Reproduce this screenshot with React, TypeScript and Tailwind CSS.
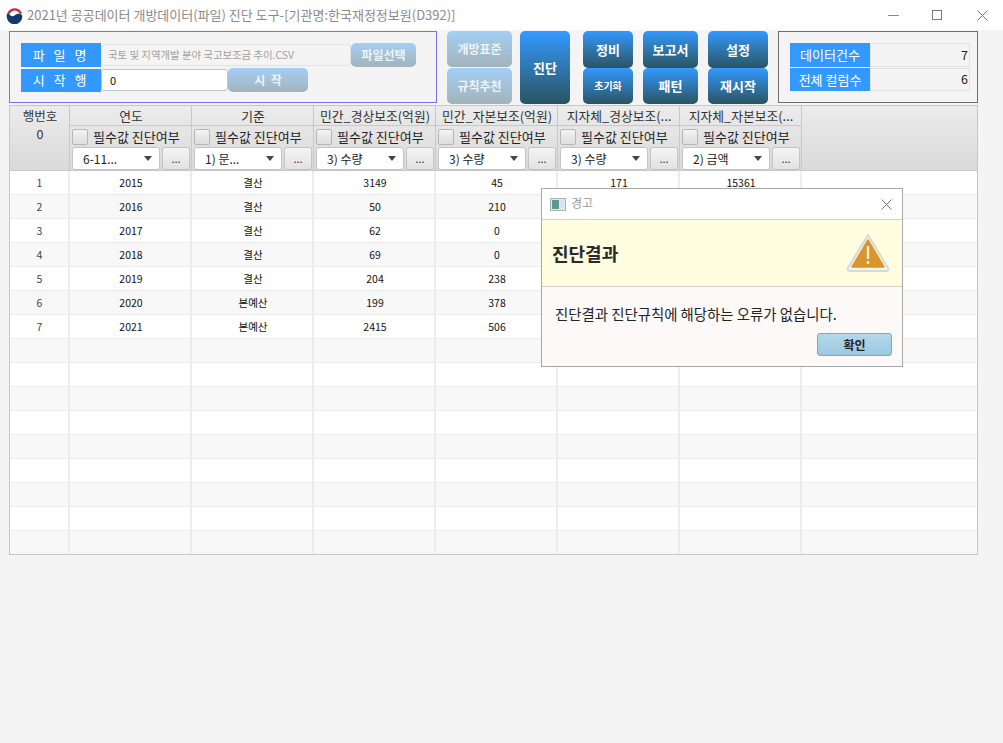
const FONT = "font-['Noto_Sans_CJK_KR','Noto_Sans',sans-serif]";

const COLUMNS = [
  { title: '연도', combo: '6-11...' },
  { title: '기준', combo: '1) 문...' },
  { title: '민간_경상보조(억원)', combo: '3) 수량' },
  { title: '민간_자본보조(억원)', combo: '3) 수량' },
  { title: '지자체_경상보조(...', combo: '3) 수량' },
  { title: '지자체_자본보조(...', combo: '2) 금액' },
];

const ROWS = [
  ['1', '2015', '결산', '3149', '45', '171', '15361'],
  ['2', '2016', '결산', '50', '210', '', ''],
  ['3', '2017', '결산', '62', '0', '', ''],
  ['4', '2018', '결산', '69', '0', '', ''],
  ['5', '2019', '결산', '204', '238', '', ''],
  ['6', '2020', '본예산', '199', '378', '', ''],
  ['7', '2021', '본예산', '2415', '506', '', ''],
];

function DarkButton({ label, w, small }: { label: string; w: string; small?: boolean }) {
  return (
    <div className={`${w} flex-1 rounded-[5px] bg-gradient-to-b from-[#3399ff] to-[#2a5463] text-white font-bold flex items-center justify-center ${small ? 'text-[10px]' : 'text-[13px]'}`}>
      {label}
    </div>
  );
}

function PaleButton({ label, className }: { label: string; className: string }) {
  return (
    <div className={`rounded-[5px] bg-gradient-to-b from-[#a3cff5] to-[#a3b3ba] text-[#eef3f6] text-[12px] font-bold flex items-center justify-center ${className}`}>
      {label}
    </div>
  );
}

function BlueLabel({ label, h, tracking }: { label: string; h: string; tracking?: string }) {
  return (
    <div className={`w-20 ${h} bg-[#3399ff] text-white text-[13px] flex items-center justify-center ${tracking ?? ''}`}>
      {label}
    </div>
  );
}

function HeaderCell({ title, combo }: { title: string; combo: string }) {
  return (
    <div className="w-[122px] shrink-0 border-r border-[#c8c8c8] flex flex-col">
      <div className="h-[23px] pl-px flex items-center justify-center text-[12.8px] text-[#333] border-b border-[#c8c8c8] whitespace-nowrap overflow-hidden">
        {title}
      </div>
      <div className="h-[19px] flex items-center pl-[2px] gap-[5px] mt-[1px]">
        <div className="w-4 h-4 rounded-[2px] border border-[#b5b5b5] bg-gradient-to-b from-[#f2f2f2] to-[#dedede]" />
        <span className="text-[13px] text-[#222] whitespace-nowrap">필수값 진단여부</span>
      </div>
      <div className="flex items-center pl-[2px] gap-[2px] mt-[1px]">
        <div className="w-[88px] h-[23px] bg-white rounded-[3px] border border-[#c4c4c4] flex items-center justify-between pl-[10px] pr-[7px] text-[12px] text-[#222]">
          <span className="whitespace-nowrap">{combo}</span>
          <span className="w-0 h-0 border-x-[4px] border-x-transparent border-t-[5px] border-t-[#444]" />
        </div>
        <div className="w-7 h-[23px] rounded-[3px] border border-[#c4c4c4] bg-gradient-to-b from-[#f4f4f4] to-[#e2e2e2] text-[11px] text-[#333] flex items-center justify-center">
          ...
        </div>
      </div>
    </div>
  );
}

function DataRow({ cells, index }: { cells: string[]; index: number }) {
  return (
    <div className={`h-6 flex border-b border-[#ececec] text-[10.5px] text-[#111] ${index % 2 === 0 ? 'bg-white' : 'bg-[#f8f8f8]'}`}>
      <div className="w-[60px] shrink-0 pl-px border-r-2 border-[#ececec] flex items-center justify-center text-[#444]">{cells[0]}</div>
      {[1, 2, 3, 4, 5, 6].map(i => (
        <div key={i} className="w-[122px] shrink-0 pl-[2px] border-r-2 border-[#ececec] flex items-center justify-center">{cells[i]}</div>
      ))}
      <div className="flex-1" />
    </div>
  );
}

function WarningIcon() {
  return (
    <svg width="46" height="42" viewBox="0 0 46 42">
      <path d="M23 3 L43 36 Q44 39 41 39 L5 39 Q2 39 3 36 Z" fill="#f6f6f0" stroke="#d8d8d4" strokeWidth="2" strokeLinejoin="round" />
      <path d="M23 8 L39 35 L7 35 Z" fill="#da962c" stroke="#da962c" strokeWidth="1.5" strokeLinejoin="round" />
      <rect x="21.8" y="14" width="2.4" height="13" fill="#fbeeda" />
      <rect x="21.8" y="29" width="2.4" height="3" fill="#fbeeda" />
    </svg>
  );
}

function Logo() {
  return (
    <svg width="17" height="17" viewBox="0 0 24 24">
      <path d="M3.5 9.5A9.5 9.5 0 0 1 20.5 8" fill="none" stroke="#cf2a3e" strokeWidth="3.4" strokeLinecap="round" />
      <path d="M1 11c0-1 2-2 3-1c2 3 6 4 8 2c3-3 8-3 10-1c1 1 1 2 1 3A11 11 0 0 1 1 13z" fill="#14396c" />
      <path d="M12 17c3 0 5-2 5-4c-2-1-4 0-5 1c-1 1-3 2-4 2c1 1 2 1 4 1z" fill="#14396c" />
    </svg>
  );
}

export default function App() {
  const rows = Array.from({ length: 16 }, (_, i) => ROWS[i] ?? ['', '', '', '', '', '', '']);

  return (
    <div className={`relative w-[1003px] h-[743px] bg-[#f4f4f4] overflow-hidden ${FONT}`}>
      {/* title bar */}
      <div className="h-[30px] bg-white flex items-center pl-[6px]">
        <Logo />
        <span className="ml-[4px] text-[13px] text-[#8a8a8a]">2021년 공공데이터 개방데이터(파일) 진단 도구-[기관명:한국재정정보원(D392)]</span>
        <div className="ml-auto flex items-center">
          <span className="w-[11px] h-px bg-[#8a8a8a] mr-[33px]" />
          <span className="w-[10px] h-[10px] border border-[#777] mr-[35px]" />
          <svg width="11" height="11" viewBox="0 0 11 11" className="mr-[15px]">
            <path d="M.5.5l10 10M10.5.5l-10 10" stroke="#777" strokeWidth="1" />
          </svg>
        </div>
      </div>

      {/* toolbar */}
      <div className="flex mt-px h-[73px] pl-[9px]">
        <div className="w-[428px] h-[72px] border border-[#7a70ee] pt-[11px] pl-[11px] flex flex-col gap-px">
          <div className="flex items-center">
            <BlueLabel label="파 일 명" h="h-6" tracking="tracking-[3px]" />
            <div className="w-[250px] h-[22px] border border-[#e2e2e2] rounded-[3px] bg-[#f4f4f4] pl-[6px] text-[10.4px] text-[#a0a0a0] flex items-center whitespace-nowrap">
              국토 및 지역개발 분야 국고보조금 추이.CSV
            </div>
            <PaleButton label="파일선택" className="w-[65px] h-6" />
          </div>
          <div className="flex items-center">
            <BlueLabel label="시 작 행" h="h-[23px]" tracking="tracking-[3px]" />
            <div className="w-[127px] h-[22px] bg-white rounded-[3px] border border-[#c4c4c4] pl-[8px] text-[11px] text-[#111] flex items-center">0</div>
            <PaleButton label="시  작" className="w-20 h-6 whitespace-pre" />
          </div>
        </div>

        <div className="ml-[10px] w-[65px] flex flex-col gap-px">
          <PaleButton label="개방표준" className="flex-1" />
          <PaleButton label="규칙추천" className="flex-1" />
        </div>
        <div className="ml-2 flex flex-col">
          <DarkButton label="진단" w="w-[50px]" />
        </div>
        <div className="ml-[13px] flex flex-col">
          <DarkButton label="정비" w="w-[50px]" />
          <DarkButton label="초기화" w="w-[50px]" small />
        </div>
        <div className="ml-[10px] flex flex-col">
          <DarkButton label="보고서" w="w-[55px]" />
          <DarkButton label="패턴" w="w-[55px]" />
        </div>
        <div className="ml-[10px] flex flex-col">
          <DarkButton label="설정" w="w-[60px]" />
          <DarkButton label="재시작" w="w-[60px]" />
        </div>

        <div className="ml-[10px] w-[200px] h-[72px] border border-[#6e6e6e] pt-[11px] pl-[11px] flex flex-col gap-px">
          <div className="flex">
            <BlueLabel label="데이터건수" h="h-6" />
            <div className="w-[100px] h-6 border border-[#e2e2e2] flex items-center justify-end pr-[1px] text-[12.5px] text-[#222]">7</div>
          </div>
          <div className="flex">
            <BlueLabel label="전체 컬럼수" h="h-[23px]" />
            <div className="w-[100px] h-[23px] border border-[#e2e2e2] flex items-center justify-end pr-[1px] text-[12.5px] text-[#222]">6</div>
          </div>
        </div>
      </div>

      {/* table */}
      <div className="ml-[9px] mt-px w-[969px] h-[450px] border border-[#c6c6c6] bg-white overflow-hidden">
        <div className="h-[65px] flex border-b border-[#c8c8c8] bg-gradient-to-b from-[#ececec] to-[#d9d9d9]">
          <div className="w-[60px] shrink-0 pl-px border-r border-[#c8c8c8] flex flex-col items-center pt-[1px] text-[12.5px] leading-[18px] text-[#333]">
            <span>행번호</span>
            <span>0</span>
          </div>
          {COLUMNS.map(c => (
            <HeaderCell key={c.title} title={c.title} combo={c.combo} />
          ))}
          <div className="flex-1" />
        </div>
        {rows.map((cells, i) => (
          <DataRow key={i} cells={cells} index={i} />
        ))}
      </div>

      {/* dialog */}
      <div className="absolute left-[541px] top-[188px] w-[362px] h-[179px] border border-[#a8a8a8] bg-[#fdf9f8] flex flex-col">
        <div className="h-[30px] bg-white flex items-center pl-[8px] pr-[10px]">
          <svg width="16" height="13" viewBox="0 0 16 13">
            <rect x=".5" y=".5" width="15" height="12" fill="#e8e8e8" stroke="#b0b0b0" />
            <rect x="2" y="2" width="7" height="9" fill="#5a9a90" />
            <rect x="10" y="2" width="4" height="9" fill="#d8e6ec" />
          </svg>
          <span className="ml-[5px] text-[12px] leading-[12px] -mt-[2px] text-[#9a9a9a]">경고</span>
          <svg width="11" height="11" viewBox="0 0 11 11" className="ml-auto">
            <path d="M.5.5l10 10M10.5.5l-10 10" stroke="#777" strokeWidth="1" />
          </svg>
        </div>
        <div className="h-[68px] bg-[#fefddf] border-y border-[#d4d4c4] flex items-center justify-between pl-[10px] pr-[11px]">
          <span className="text-[18px] font-bold text-[#2a2a2a]">진단결과</span>
          <WarningIcon />
        </div>
        <div className="flex-1 flex flex-col px-[13px]">
          <p className="mt-[18px] text-[14.4px] leading-[18px] text-[#222] whitespace-nowrap">진단결과 진단규칙에 해당하는 오류가 없습니다.</p>
          <div className="mt-[10px] self-end -mr-[3px] w-[75px] h-[23px] rounded-[3px] border border-[#7da8c0] bg-gradient-to-b from-[#b4d8ea] to-[#9cc8e0] text-[12px] font-bold text-[#222] flex items-center justify-center">
            확인
          </div>
        </div>
      </div>
    </div>
  );
}
